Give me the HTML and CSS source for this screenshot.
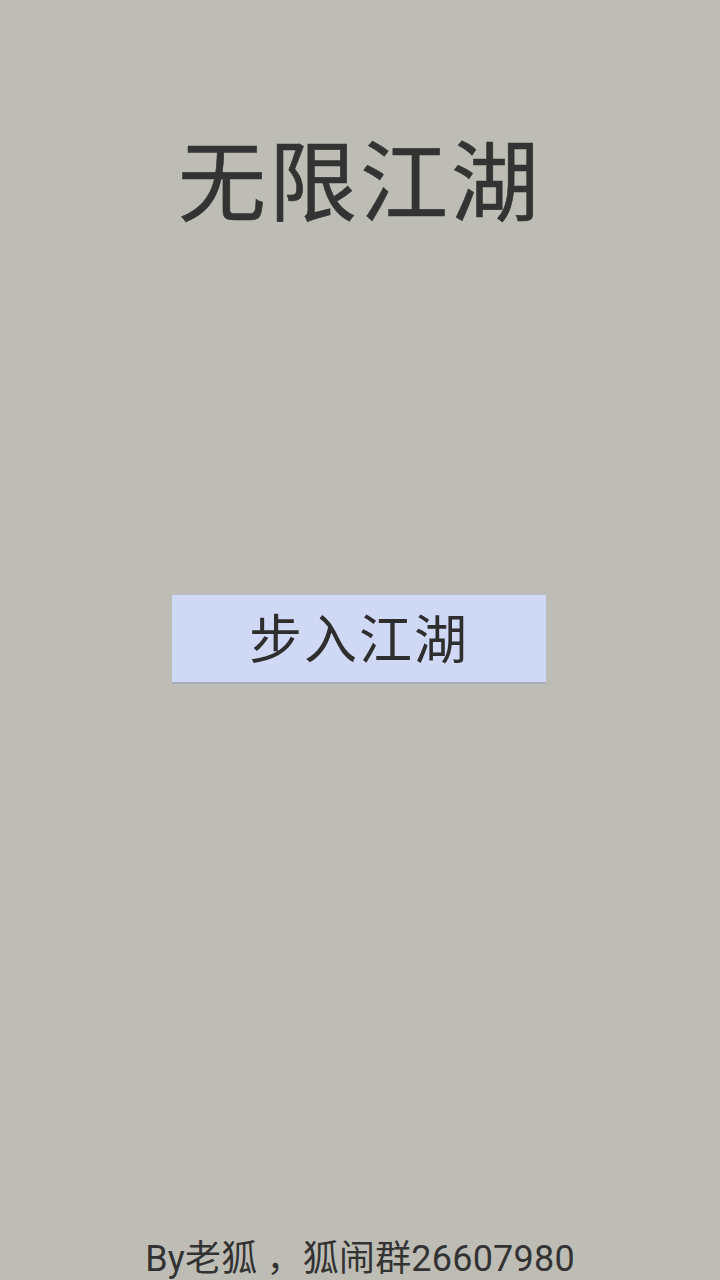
FILE: index.html
```html
<!DOCTYPE html>
<html lang="zh">
<head>
<meta charset="utf-8">
<link rel="stylesheet" href="styles.css">
</head>
<body>
<div class="page">
  <h1 class="title">无限江湖</h1>
  <div class="middle">
    <button class="enter"><span class="enter-label">步入江湖</span></button>
  </div>
  <div class="footer">By老狐 ，狐闹群26607980</div>
</div>
</body>
</html>
```
FILE: styles.css
```css
html, body {
  margin: 0;
  padding: 0;
  background: #bebdb5;
}
.page {
  width: 720px;
  height: 1280px;
  display: flex;
  flex-direction: column;
  align-items: center;
  font-family: "Noto Sans CJK SC", "Noto Sans", sans-serif;
  color: #333333;
  overflow: hidden;
}
.title {
  margin: 120px 0 0 0;
  font-size: 88px;
  font-weight: 400;
  line-height: 112px;
  letter-spacing: 3px;
  color: #333333;
  -webkit-text-stroke: 0.6px #333333;
}
.middle {
  flex: 1;
  display: flex;
  align-items: flex-start;
  justify-content: center;
  padding-top: 362px;
  padding-right: 2px;
}
.enter {
  width: 374px;
  height: 90px;
  background: #cfd8f4;
  border: none;
  border-top: 1px solid #b8bcc8;
  border-bottom: 2px solid #a9acb6;
  font-family: "Noto Sans CJK SC", "Noto Sans", sans-serif;
  font-size: 53px;
  font-weight: 400;
  color: #2e2e2e;
  letter-spacing: 2px;
  padding: 0 0 6px 0;
}
.enter-label {
  display: block;
  line-height: 80px;
}
.footer {
  font-family: Roboto, "Noto Sans CJK SC", sans-serif;
  font-size: 36px;
  line-height: 42px;
  letter-spacing: 0.2px;
  margin-bottom: 0;
  color: #333333;
}
```
